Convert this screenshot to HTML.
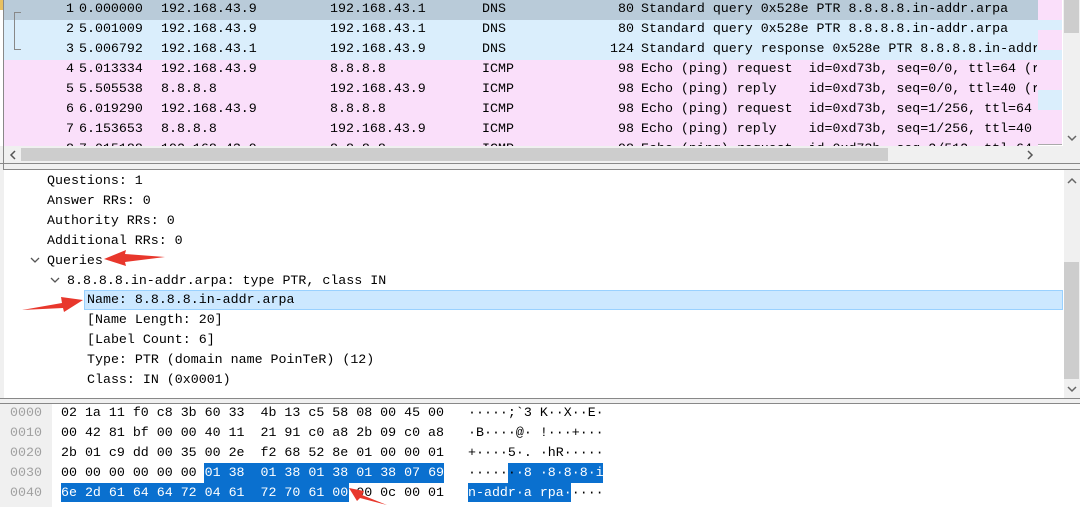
<!DOCTYPE html>
<html><head><style>
*{margin:0;padding:0;box-sizing:border-box}
body{width:1080px;height:507px;overflow:hidden;background:#f0f0f0;font-family:"Liberation Mono",monospace;font-size:13.3px;position:relative}
.a{position:absolute;white-space:pre;line-height:20px}
.row{position:absolute;left:4px;width:1034px;height:20px}
</style></head><body>
<!-- packet list -->
<div style="position:absolute;left:0;top:0;width:1080px;height:146px;background:#fff"></div>
<div style="position:absolute;left:0;top:0;width:3px;height:10px;background:#e8c060"></div>
<div style="position:absolute;left:3px;top:0;width:1px;height:170px;background:#888"></div>
<div class="row" style="top:0;background:#b9cbd9"></div>
<div class="row" style="top:20px;height:40px;background:#daeefc"></div>
<div class="row" style="top:60px;height:86px;background:#fadffa"></div>
<div style="position:absolute;left:14px;top:12px;width:7px;height:38px;border-left:1px solid #888;border-top:1px solid #888;border-bottom:1px solid #888"></div>
<div id="pl"></div>
<!-- right minimap + scrollbar -->
<div style="position:absolute;left:1038px;top:0;width:25px;height:146px;background:#fff"></div>
<div style="position:absolute;left:1038px;top:0;width:24px;height:145px;background:#fadffa;border-bottom:1px solid #aaa"></div>
<div style="position:absolute;left:1038px;top:20px;width:24px;height:10px;background:#daeefc"></div>
<div style="position:absolute;left:1038px;top:50px;width:24px;height:10px;background:#daeefc"></div>
<div style="position:absolute;left:1038px;top:90px;width:24px;height:20px;background:#daeefc"></div>
<div style="position:absolute;left:1063px;top:0;width:17px;height:146px;background:#f0f0f0"></div>
<div style="position:absolute;left:1064px;top:0;width:15px;height:33px;background:#cdcdcd"></div>
<svg style="position:absolute;left:1067px;top:134px" width="10" height="8"><path d="M1 2l4 4 4-4" stroke="#666" stroke-width="1.5" fill="none"/></svg>
<!-- hscroll -->
<div style="position:absolute;left:4px;top:146px;width:1059px;height:17px;background:#f0f0f0"></div>
<div style="position:absolute;left:21px;top:148px;width:867px;height:13px;background:#cdcdcd"></div>
<svg style="position:absolute;left:9px;top:150px" width="8" height="10"><path d="M6 1L2 5l4 4" stroke="#555" stroke-width="1.5" fill="none"/></svg>
<svg style="position:absolute;left:1026px;top:150px" width="8" height="10"><path d="M2 1l4 4-4 4" stroke="#555" stroke-width="1.5" fill="none"/></svg>
<div style="position:absolute;left:0;top:163px;width:1080px;height:1px;background:#888"></div>
<!-- details -->
<div style="position:absolute;left:4px;top:169px;width:1076px;height:229px;background:#fff;border-top:1px solid #888"></div>
<div style="position:absolute;left:1064px;top:170px;width:16px;height:228px;background:#f0f0f0"></div>
<div style="position:absolute;left:1064px;top:262px;width:15px;height:117px;background:#cdcdcd"></div>
<svg style="position:absolute;left:1067px;top:177px" width="10" height="8"><path d="M1 6l4-4 4 4" stroke="#666" stroke-width="1.5" fill="none"/></svg>
<svg style="position:absolute;left:1067px;top:385px" width="10" height="8"><path d="M1 2l4 4 4-4" stroke="#666" stroke-width="1.5" fill="none"/></svg>
<div style="position:absolute;left:84px;top:290px;width:979px;height:20px;background:#cce8ff;border:1px solid #99d1ff"></div>
<div class="a" style="left:47px;top:171px">Questions: 1
Answer RRs: 0
Authority RRs: 0
Additional RRs: 0
Queries</div>
<div class="a" style="left:67px;top:271px">8.8.8.8.in-addr.arpa: type PTR, class IN</div>
<div class="a" style="left:87px;top:290px">Name: 8.8.8.8.in-addr.arpa
[Name Length: 20]
[Label Count: 6]
Type: PTR (domain name PoinTeR) (12)
Class: IN (0x0001)</div>
<svg style="position:absolute;left:28px;top:254px" width="40" height="30"><path d="M3 4l4 4 4-4M23 24l4 4 4-4" stroke="#555" stroke-width="1.3" fill="none"/></svg>
<div style="position:absolute;left:0;top:398px;width:1080px;height:1px;background:#888"></div>
<!-- hex pane -->
<div style="position:absolute;left:0;top:403px;width:1080px;height:104px;background:#fff;border-top:1px solid #888"></div>
<div style="position:absolute;left:0;top:404px;width:52px;height:103px;background:#f0f0f0"></div>
<div style="position:absolute;left:204px;top:463px;width:240px;height:20px;background:#0a70cf"></div>
<div style="position:absolute;left:61px;top:483px;width:288px;height:19px;background:#0a70cf"></div>
<div style="position:absolute;left:508px;top:463px;width:95px;height:20px;background:#0a70cf"></div>
<div style="position:absolute;left:468px;top:483px;width:103px;height:19px;background:#0a70cf"></div>
<div class="a" style="left:10px;top:403px;color:#a0a0a0">0000
0010
0020
0030
0040</div>
<div class="a" style="left:61px;top:403px">02 1a 11 f0 c8 3b 60 33  4b 13 c5 58 08 00 45 00
00 42 81 bf 00 00 40 11  21 91 c0 a8 2b 09 c0 a8
2b 01 c9 dd 00 35 00 2e  f2 68 52 8e 01 00 00 01
00 00 00 00 00 00 <span style="color:#fff">01 38  01 38 01 38 01 38 07 69</span>
<span style="color:#fff">6e 2d 61 64 64 72 04 61  72 70 61 00</span> 00 0c 00 01</div>
<div class="a" style="left:468px;top:403px">·····;`3 K··X··E·
·B····@· !···+···
+····5·. ·hR·····
······<span style="color:#fff">·8 ·8·8·8·i</span>
<span style="color:#fff">n-addr·a rpa·</span>····</div>
<!-- red arrows -->
<svg style="position:absolute;left:0;top:0" width="1080" height="507">
<path d="M165 257 L125 254 L126 250 L104 259 L126 266 L125 262 Z" fill="#e8372c"/>
<path d="M22 310 L62 303 L61 297 L83 300 L64 312 L63 308 Z" fill="#e8372c"/>
<path d="M387 505 L362 495 L364 491 L349 488 L357 501 L360 498 Z" fill="#e8372c"/>
</svg>
<script>
var r=[["1","0.000000","192.168.43.9","192.168.43.1","DNS","80","Standard query 0x528e PTR 8.8.8.8.in-addr.arpa"],
["2","5.001009","192.168.43.9","192.168.43.1","DNS","80","Standard query 0x528e PTR 8.8.8.8.in-addr.arpa"],
["3","5.006792","192.168.43.1","192.168.43.9","DNS","124","Standard query response 0x528e PTR 8.8.8.8.in-addr.arpa"],
["4","5.013334","192.168.43.9","8.8.8.8","ICMP","98","Echo (ping) request  id=0xd73b, seq=0/0, ttl=64 (reply in 5)"],
["5","5.505538","8.8.8.8","192.168.43.9","ICMP","98","Echo (ping) reply    id=0xd73b, seq=0/0, ttl=40 (request in 4)"],
["6","6.019290","192.168.43.9","8.8.8.8","ICMP","98","Echo (ping) request  id=0xd73b, seq=1/256, ttl=64 (reply in 7)"],
["7","6.153653","8.8.8.8","192.168.43.9","ICMP","98","Echo (ping) reply    id=0xd73b, seq=1/256, ttl=40 (request in 6)"],
["8","7.015188","192.168.43.9","8.8.8.8","ICMP","98","Echo (ping) request  id=0xd73b, seq=2/512, ttl=64"]];
var h="";r.forEach(function(x,i){var t=i*20-1;
h+='<div class="a" style="top:'+t+'px;left:40px;width:34px;text-align:right">'+x[0]+'</div>';
h+='<div class="a" style="top:'+t+'px;left:79px">'+x[1]+'</div>';
h+='<div class="a" style="top:'+t+'px;left:161px">'+x[2]+'</div>';
h+='<div class="a" style="top:'+t+'px;left:330px">'+x[3]+'</div>';
h+='<div class="a" style="top:'+t+'px;left:482px">'+x[4]+'</div>';
h+='<div class="a" style="top:'+t+'px;left:590px;width:44px;text-align:right">'+x[5]+'</div>';
h+='<div class="a" style="top:'+t+'px;left:641px;width:396px;overflow:hidden">'+x[6]+'</div>';});
document.getElementById("pl").innerHTML='<div style="position:absolute;left:0;top:0;width:1037px;height:146px;overflow:hidden">'+h+'</div>';
</script>
</body></html>
